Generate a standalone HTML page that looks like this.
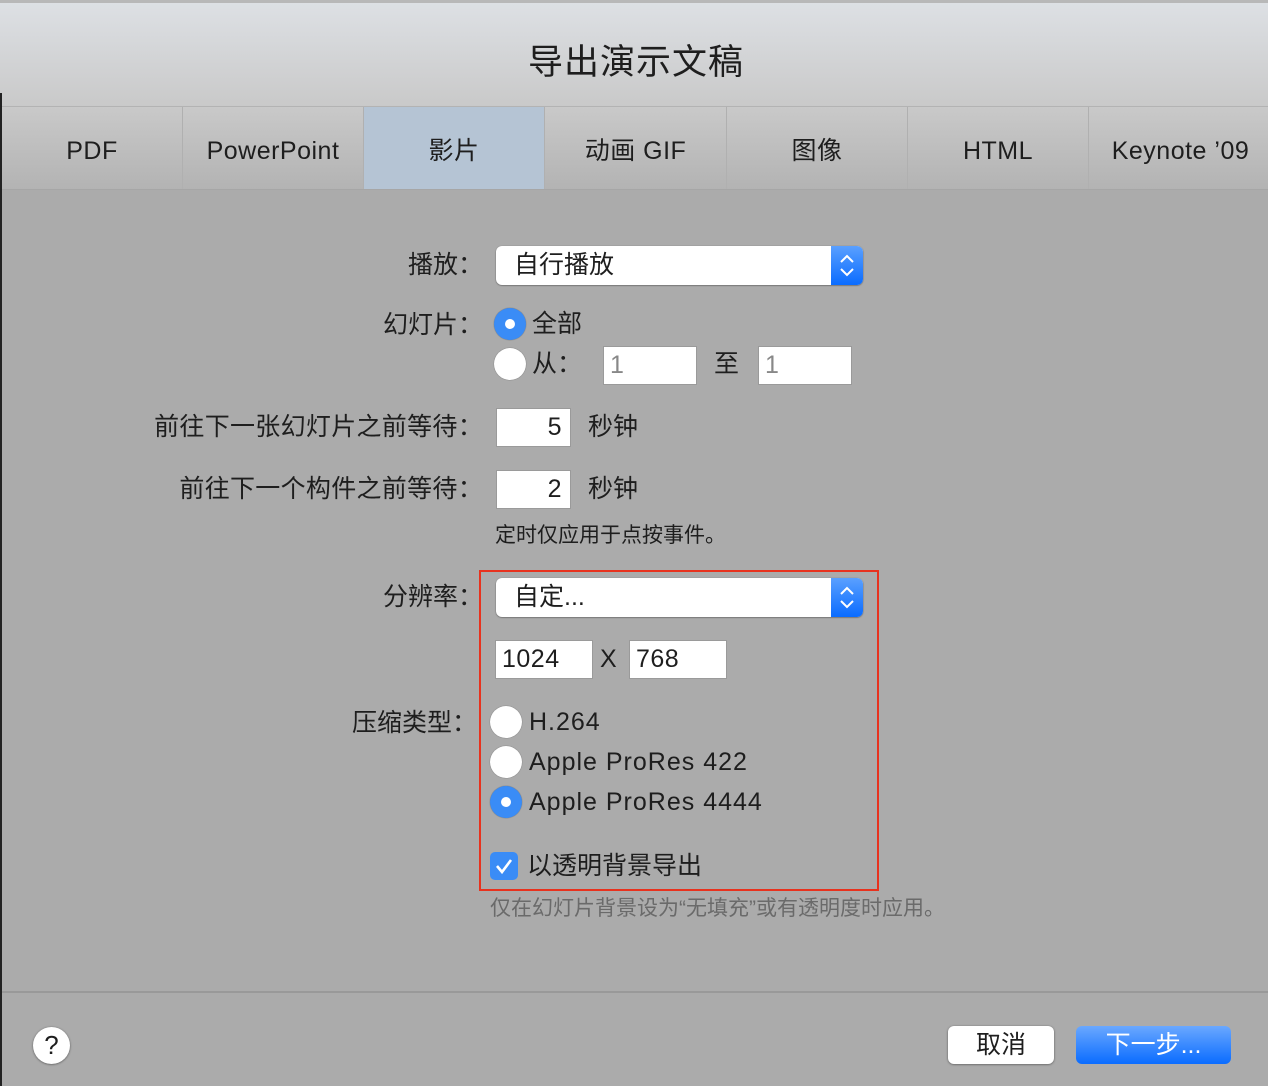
<!DOCTYPE html>
<html><head><meta charset="utf-8"><style>
*{margin:0;padding:0;box-sizing:border-box}
body{width:1268px;height:1086px;overflow:hidden;background:#ababab;font-family:"Liberation Sans","Noto Sans CJK SC",sans-serif;color:#1e1e1e;position:relative}
.a{position:absolute}
.lbl{position:absolute;font-size:25px;line-height:30px;white-space:nowrap}
.r{text-align:right}
.lt{letter-spacing:1px}
.fld{position:absolute;background:#fff;border:1px solid #9a9a9a;font-size:25px;line-height:36px;padding-left:6px;letter-spacing:0.5px}
.pop{position:absolute;background:#fff;border-radius:6px;box-shadow:0 0.5px 1.5px rgba(0,0,0,.5);font-size:25px;line-height:39px;padding-left:18px}
.pop .b{position:absolute;right:0;top:0;width:32px;height:100%;background:linear-gradient(#5aa0ff,#0a6cff);border-radius:0 6px 6px 0}
.rad{position:absolute;width:32px;height:32px;border-radius:50%;background:#fff;box-shadow:0 0 1px rgba(0,0,0,.5)}
.rad.on{background:#3a8cf6}
.rad.on:after{content:"";position:absolute;left:11px;top:11px;width:10px;height:10px;border-radius:50%;background:#fff}
.tab{position:absolute;top:107px;height:82px;font-size:25px;line-height:88px;text-align:center;border-right:1px solid #b0b0b0;letter-spacing:0.5px}
</style></head><body>
<div class="a" style="left:0;top:0;width:1268px;height:107px;background:linear-gradient(#dde0e4,#c9c9c9);border-top:3px solid #b8b8b8"></div>
<div class="a" style="left:0;top:93px;width:2px;height:993px;background:#222"></div>
<div class="lbl" style="left:0;width:1272px;text-align:center;top:42px;font-size:35px;line-height:42px;letter-spacing:1px">导出演示文稿</div>
<div class="a" style="left:2px;top:106px;width:1266px;height:84px;background:linear-gradient(#c9c9c9,#b3b3b3);border-top:1px solid #b3b3b3;border-bottom:1px solid #a6a6a6"></div>
<div class="tab" style="left:2px;width:181px">PDF</div>
<div class="tab" style="left:183px;width:181px">PowerPoint</div>
<div class="tab" style="left:364px;width:181px;background:#b5c4d4">影片</div>
<div class="tab" style="left:545px;width:182px">动画 GIF</div>
<div class="tab" style="left:727px;width:181px">图像</div>
<div class="tab" style="left:908px;width:181px">HTML</div>
<div class="tab" style="left:1089px;width:183px;border:0">Keynote ’09</div>

<div class="lbl r" style="left:100px;width:383px;top:250px">播放：</div>
<div class="pop" style="left:496px;top:246px;width:367px;height:39px">自行播放<div class="b"><svg width="32" height="39"><path d="M10 16l6-6 6 6M10 23l6 6 6-6" stroke="#fff" stroke-width="2" fill="none"/></svg></div></div>

<div class="lbl r" style="left:100px;width:383px;top:310px">幻灯片：</div>
<div class="rad on" style="left:494px;top:308px"></div><div class="lbl" style="left:532px;top:309px">全部</div>
<div class="rad" style="left:494px;top:348px"></div><div class="lbl" style="left:532px;top:349px">从：</div>
<div class="fld" style="left:603px;top:346px;width:94px;height:39px;color:#888">1</div>
<div class="lbl" style="left:714px;top:349px">至</div>
<div class="fld" style="left:758px;top:346px;width:94px;height:39px;color:#888">1</div>

<div class="lbl r" style="left:60px;width:423px;top:412px;letter-spacing:0.3px">前往下一张幻灯片之前等待：</div>
<div class="fld r" style="left:496px;top:408px;width:75px;height:39px;padding-right:8px">5</div>
<div class="lbl" style="left:588px;top:412px">秒钟</div>
<div class="lbl r" style="left:60px;width:423px;top:474px;letter-spacing:0.3px">前往下一个构件之前等待：</div>
<div class="fld r" style="left:496px;top:470px;width:75px;height:39px;padding-right:8px">2</div>
<div class="lbl" style="left:588px;top:474px">秒钟</div>
<div class="lbl" style="left:495px;top:521px;font-size:21px">定时仅应用于点按事件。</div>

<div class="a" style="left:479px;top:570px;width:400px;height:321px;border:2px solid #e8321e"></div>
<div class="lbl r" style="left:100px;width:383px;top:582px">分辨率：</div>
<div class="pop" style="left:496px;top:578px;width:367px;height:39px">自定...<div class="b"><svg width="32" height="39"><path d="M10 16l6-6 6 6M10 23l6 6 6-6" stroke="#fff" stroke-width="2" fill="none"/></svg></div></div>
<div class="fld" style="left:495px;top:640px;width:98px;height:39px;color:#1e1e1e">1024</div>
<div class="lbl" style="left:600px;top:644px">X</div>
<div class="fld" style="left:629px;top:640px;width:98px;height:39px;color:#1e1e1e">768</div>

<div class="lbl r" style="left:100px;width:377px;top:708px">压缩类型：</div>
<div class="rad" style="left:490px;top:706px"></div><div class="lbl lt" style="left:529px;top:707px">H.264</div>
<div class="rad" style="left:490px;top:746px"></div><div class="lbl lt" style="left:529px;top:747px">Apple ProRes 422</div>
<div class="rad on" style="left:490px;top:786px"></div><div class="lbl lt" style="left:529px;top:787px">Apple ProRes 4444</div>
<div class="a" style="left:490px;top:852px;width:28px;height:28px;border-radius:5px;background:#3a8cf6"><svg width="28" height="28"><path d="M7 14l5 6 9-12" stroke="#fff" stroke-width="2.6" fill="none"/></svg></div>
<div class="lbl" style="left:527px;top:851px">以透明背景导出</div>
<div class="lbl" style="left:490px;top:894px;font-size:21px;color:#6a6a6a">仅在幻灯片背景设为“无填充”或有透明度时应用。</div>

<div class="a" style="left:2px;top:991px;width:1266px;height:2px;background:#999"></div>
<div class="a" style="left:33px;top:1027px;width:37px;height:37px;border-radius:50%;background:#fff;box-shadow:0 0.5px 2px rgba(0,0,0,.5);text-align:center;font-size:26px;line-height:37px">?</div>
<div class="a" style="left:948px;top:1026px;width:106px;height:38px;border-radius:6px;background:#fff;box-shadow:0 0.5px 2px rgba(0,0,0,.5);text-align:center;font-size:25px;line-height:38px">取消</div>
<div class="a" style="left:1076px;top:1026px;width:155px;height:38px;border-radius:6px;background:linear-gradient(#6aa8ff,#0a6cff);text-align:center;font-size:25px;line-height:38px;color:#fff">下一步...</div>
</body></html>
